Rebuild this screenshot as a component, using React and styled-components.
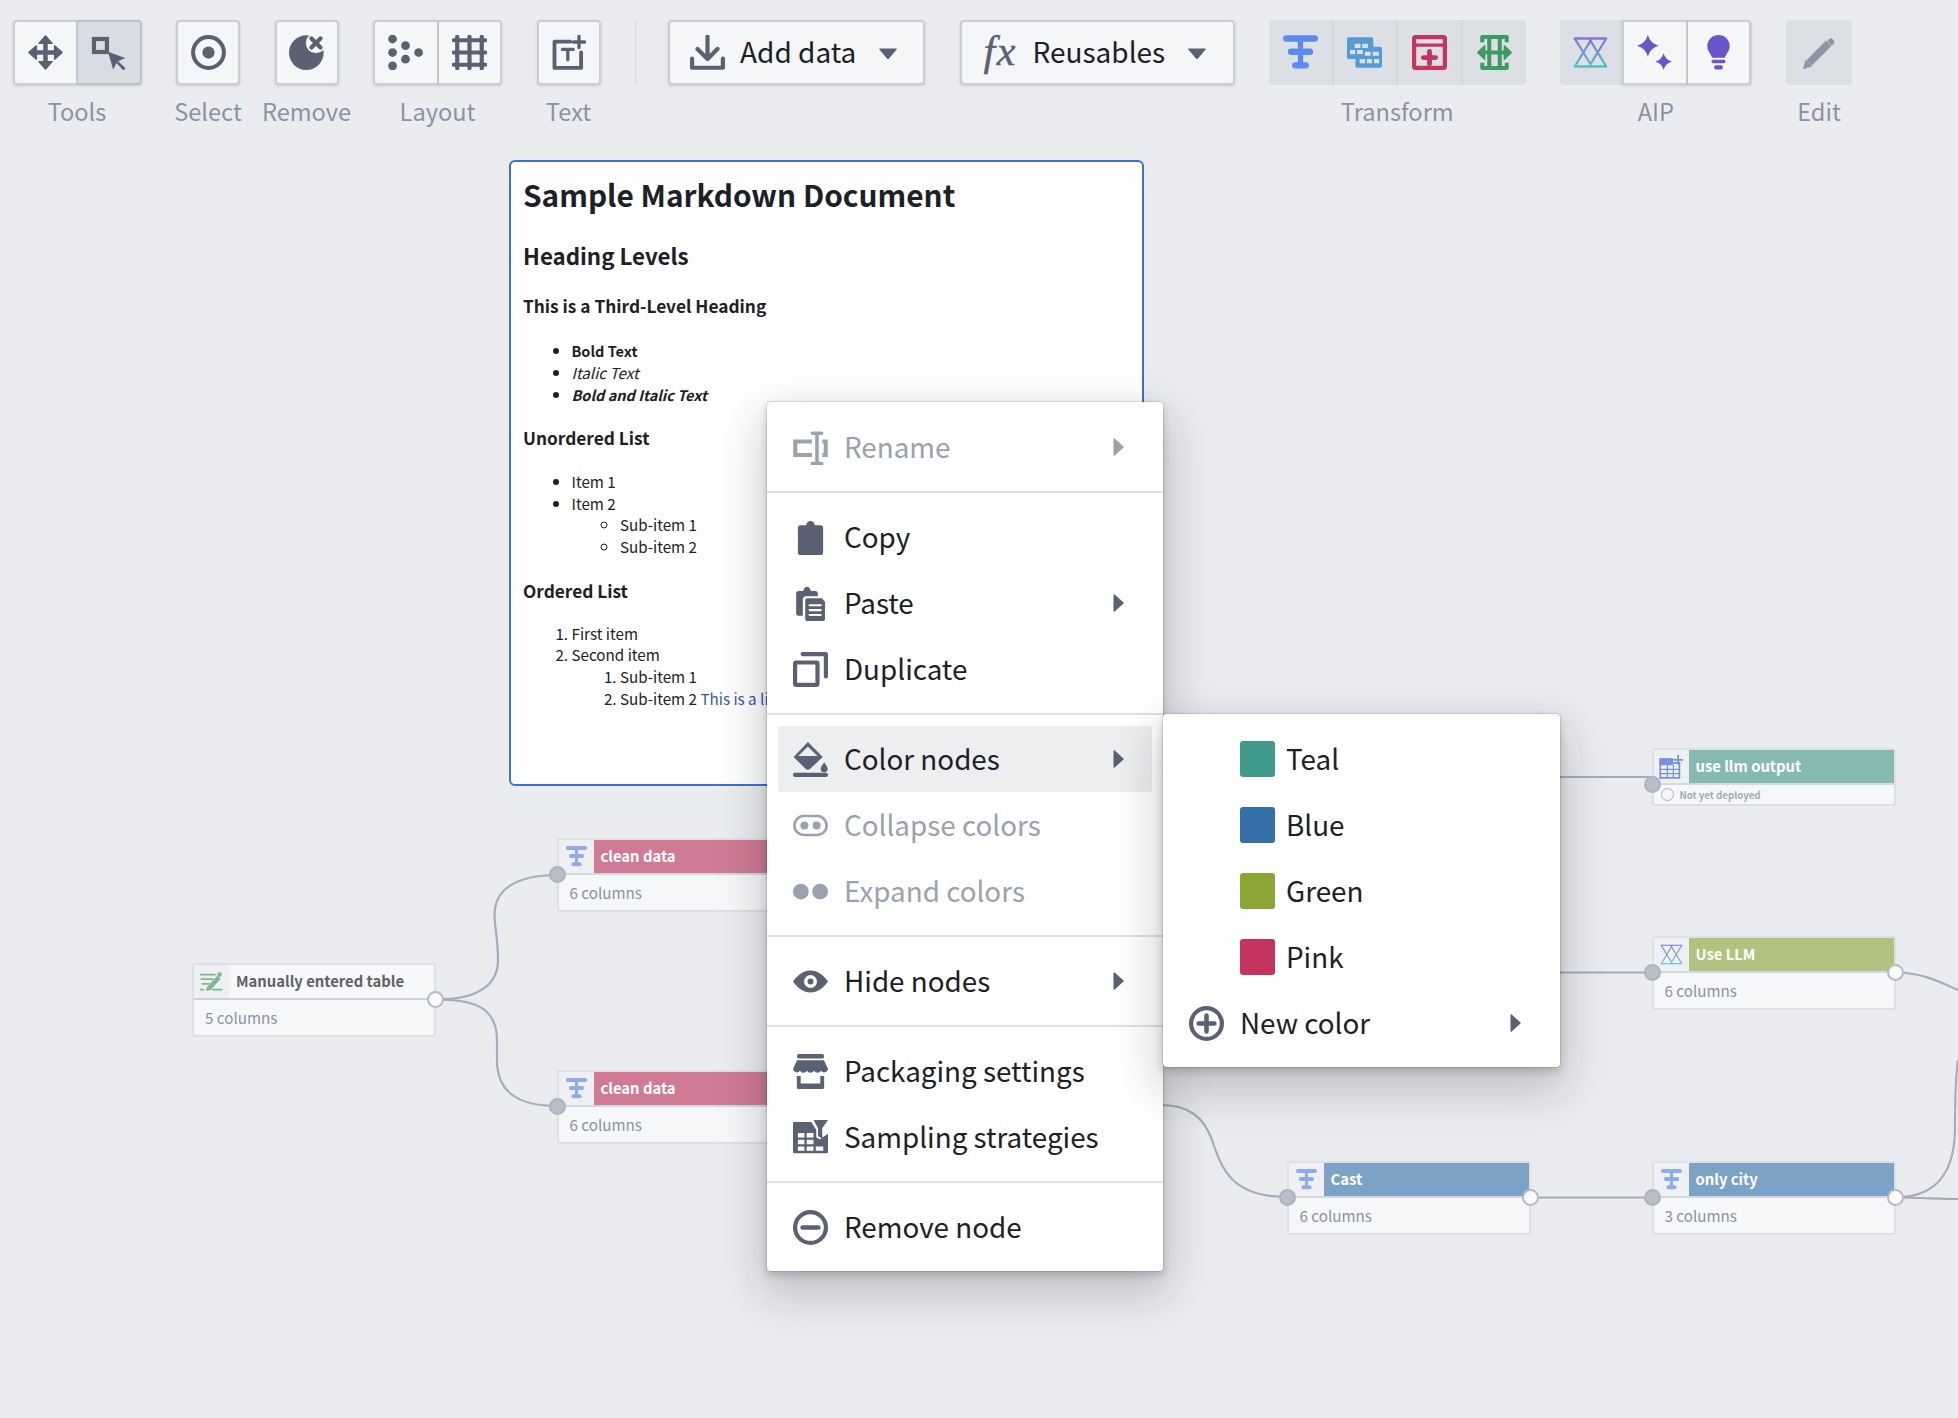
import React from "react";
import styled, { createGlobalStyle } from "styled-components";

const FONT = `"Noto Sans CJK JP", "Noto Sans", sans-serif`;
const INK = "#5a6172";
const DIM = "#9aa1af";
const CANVAS_TOP = 130;

const Global = createGlobalStyle`
  html, body { margin: 0; padding: 0; background: #ebecf0; }
  body { font-family: ${FONT}; color: #1c2127; }
  * { box-sizing: border-box; }
`;

const Page = styled.div`
  width: 1958px;
  height: 1418px;
  overflow: hidden;
  display: flex;
  flex-direction: column;
  background: #ebecf0;
`;

/* ---------- toolbar ---------- */
const Toolbar = styled.div`
  height: ${CANVAS_TOP}px;
  flex: none;
  display: flex;
  align-items: flex-start;
  gap: 34.5px;
  padding: 20px 0 0 12.5px;
`;
const Group = styled.div`
  width: ${(p) => p.$w}px;
  flex: none;
  display: flex;
  flex-direction: column;
  align-items: center;
`;
const Cells = styled.div`
  display: flex;
  width: 100%;
  height: 65px;
  border-radius: 4px;
  background: ${(p) => (p.$flat ? "#dcdfe4" : "transparent")};
`;
const Cell = styled.div`
  flex: 1;
  min-width: 0;
  height: 100%;
  display: flex;
  align-items: center;
  justify-content: center;
  background: ${(p) => (p.$active ? "#d8dce3" : p.$flat ? "transparent" : "#f5f6f8")};
  border: ${(p) => (p.$flat ? "0" : `2px solid ${p.$active ? "#bec2c8" : "#cbced3"}`)};
  border-left-width: ${(p) => (p.$joined ? "0" : undefined)};
  border-right: ${(p) => (p.$flat && p.$divide ? "2px solid #d4d7dc" : undefined)};
  box-shadow: ${(p) => (p.$flat ? "none" : "0 1px 3px rgba(17, 20, 24, 0.16)")};
  &:first-child { border-radius: 4px 0 0 4px; }
  &:last-child { border-radius: 0 4px 4px 0; }
  &:only-child { border-radius: 4px; }
`;
const Label = styled.div`
  margin-top: 10px;
  font-size: 23.6px;
  line-height: 32px;
  color: #8a93a3;
  white-space: nowrap;
`;
const Divider = styled.div`
  width: 1px;
  height: 65px;
  margin-right: -2.5px;
  flex: none;
  background: #d6d9de;
`;
const DropButton = styled.div`
  width: ${(p) => p.$w}px;
  height: 65px;
  flex: none;
  display: flex;
  align-items: center;
  padding-left: 20px;
  gap: 15px;
  background: #f5f6f8;
  border: 2px solid #cbced3;
  border-radius: 4px;
  box-shadow: 0 1px 3px rgba(17, 20, 24, 0.16);
  font-size: 28px;
  line-height: 40px;
`;
const DropText = styled.span`
  margin-right: 8px;
  margin-top: -3px;
  white-space: nowrap;
`;
const DropCaret = styled.span`
  margin-top: 2px;
`;
const Fx = styled.span`
  width: 34px;
  margin-left: 2px;
  margin-top: -4px;
  font-family: "Liberation Serif", serif;
  font-style: italic;
  font-size: 42px;
  letter-spacing: 1.5px;
  -webkit-text-stroke: 0.4px ${INK};
  color: ${INK};
  white-space: nowrap;
`;

/* ---------- canvas ---------- */
const Canvas = styled.div`
  position: relative;
  flex: 1;
`;
const Edges = styled.svg`
  position: absolute;
  left: 0;
  top: 0;
`;
const Doc = styled.div`
  position: absolute;
  left: 509px;
  top: ${160 - CANVAS_TOP}px;
  width: 635px;
  height: 626px;
  padding: 11.5px 12px 0;
  background: #fff;
  border: 2px solid #3f6fcf;
  border-radius: 6px;
`;
const H1 = styled.h1`
  margin: 0;
  font-size: 29.8px;
  line-height: 40px;
  font-weight: 700;
  white-space: nowrap;
`;
const H2 = styled.h2`
  margin: 26px 0 0;
  font-size: 22.3px;
  line-height: 30px;
  font-weight: 700;
`;
const H3 = styled.h3`
  margin: ${(p) => p.$top}px 0 0;
  font-size: 17.3px;
  line-height: 26px;
  font-weight: 700;
`;
const List = styled.ul`
  margin: ${(p) => (p.$nested ? 0 : p.$top)}px 0 0;
  padding-left: 48.5px;
  font-size: 15.2px;
  line-height: 21.8px;
  list-style-type: ${(p) => p.$marker};
  white-space: nowrap;
`;
const Italic = styled.em`
  font-style: italic;
`;
const Strong = styled.strong`
  font-weight: 700;
  font-size: 14.5px;
`;
const DocLink = styled.a`
  color: #2d58b4;
`;

/* ---------- nodes ---------- */
const Node = styled.div`
  position: absolute;
  left: ${(p) => p.$x}px;
  top: ${(p) => p.$y - CANVAS_TOP}px;
  width: 244px;
  background: #f6f7f9;
  border: 2px solid #dde0e5;
  border-radius: 3px;
`;
const NodeHead = styled.div`
  position: relative;
  height: 35px;
  display: flex;
  border-bottom: 2px solid ${(p) => (p.$color ? "#d4d8df" : "#cdd1d9")};
`;
const NodeIcon = styled.div`
  width: 35px;
  flex: none;
  display: flex;
  align-items: center;
  justify-content: center;
  background: #eef0f3;
`;
const NodeTitle = styled.div`
  flex: 1;
  display: flex;
  align-items: center;
  padding: 0 0 2px 7px;
  background: ${(p) => p.$color || "#f7f8fa"};
  color: ${(p) => (p.$color ? "#fff" : "#5f6368")};
  font-size: 14.8px;
  line-height: 22px;
  font-weight: 700;
  white-space: nowrap;
`;
const NodeBody = styled.div`
  height: 35px;
  display: flex;
  align-items: center;
  padding: 0 0 2px 11px;
  color: #8a93a3;
  font-size: 15.2px;
  line-height: 22px;
  white-space: nowrap;
`;
const NodeStatus = styled.div`
  height: 19px;
  display: flex;
  align-items: center;
  gap: 6px;
  padding-left: 7px;
  color: #a4aab5;
  font-size: 9.7px;
  line-height: 14px;
  font-weight: 700;
  white-space: nowrap;
`;
const StatusDot = styled.span`
  width: 13px;
  height: 13px;
  border: 1.5px solid #a9afb9;
  border-radius: 50%;
`;
const Port = styled.span`
  position: absolute;
  z-index: 1;
  ${(p) => (p.$out ? "right: -10px;" : "left: -10px;")}
  top: 100%;
  width: 17px;
  height: 17px;
  margin-top: -7.5px;
  border-radius: 50%;
  background: ${(p) => (p.$out ? "#fbfbfc" : "#b9bfc9")};
  border: 2px solid ${(p) => (p.$out ? "#b5bbc5" : "#adb3be")};
`;

/* ---------- menus ---------- */
const Menu = styled.div`
  position: absolute;
  left: ${(p) => p.$x}px;
  top: ${(p) => p.$y - CANVAS_TOP}px;
  width: ${(p) => p.$w}px;
  z-index: ${(p) => p.$z};
  background: #fff;
  border-radius: 4px;
  box-shadow: 0 0 0 1px rgba(17, 20, 24, 0.1), 0 4px 8px rgba(17, 20, 24, 0.2),
    0 18px 46px 6px rgba(17, 20, 24, 0.2);
`;
const Section = styled.div`
  padding: 11px;
  & + & { border-top: 2px solid #dfe1e5; }
  &:first-child { padding-top: 12px; }
`;
const Row = styled.div`
  height: 66px;
  display: flex;
  align-items: center;
  gap: ${(p) => (p.$tight ? 11 : 16)}px;
  padding: 0 28px 0 15px;
  border-radius: 3px;
  background: ${(p) => (p.$hover ? "#edeef0" : "transparent")};
  color: ${(p) => (p.$disabled ? DIM : "#1c2127")};
  font-size: 27.8px;
  line-height: 40px;
  white-space: nowrap;
`;
const RowText = styled.span`
  flex: 1;
  margin-top: -3px;
`;
const Swatch = styled.span`
  width: 35px;
  height: 36px;
  flex: none;
  margin-left: 51px;
  border-radius: 3px;
  background: ${(p) => p.$color};
`;

/* ---------- icons ---------- */
const Ico = ({ size = 35, color = INK, children, vb = "0 0 20 20" }) => (
  <svg width={size} height={size} viewBox={vb} fill={color} stroke="none" style={{ display: "block", flex: "none" }}>
    {children}
  </svg>
);
const s = (color, w) => ({ fill: "none", stroke: color, strokeWidth: w, strokeLinecap: "round", strokeLinejoin: "round" });

const MoveIcon = () => (
  <Ico>
    <path d="M10 2v16M2 10h16" {...s(INK, 2.6)} />
    <path d="M10 .5l3.800 4.300h-7.600zM10 19.500l3.800-4.300h-7.600zM.5 10l4.300-3.800v7.600zM19.500 10l-4.300-3.800v7.600z" stroke={INK} strokeWidth="0.8" strokeLinejoin="round" />
  </Ico>
);
const SelectBoxIcon = () => (
  <Ico>
    <rect x="1.700" y="2.300" width="7.400" height="7.400" fill="none" stroke={INK} strokeWidth="2.400" />
    <path d="M9.700 9.500L19.600 13.200L15.500 15L19.800 19L18.500 20.200L14.500 16L12.700 19.800z" />
  </Ico>
);
const TargetIcon = () => (
  <Ico>
    <circle cx="10" cy="10" r="8.800" {...s(INK, 2.300)} />
    <circle cx="10" cy="10" r="3.500" />
  </Ico>
);
const RemoveIcon = () => (
  <Ico>
    <circle cx="9.900" cy="10.100" r="9.900" />
    <circle cx="15.400" cy="4.600" r="5.800" fill="#f5f6f8" />
    <path d="M12.800 2l5.200 5.200M18 2l-5.200 5.200" {...s(INK, 2.400)} />
  </Ico>
);
const DotsIcon = () => (
  <Ico>
    {[[2.600, 2.300], [2.600, 10], [2.600, 17.600], [10, 6.100], [10, 13.800], [17.500, 10]].map(([x, y]) => (
      <circle key={`${x}-${y}`} cx={x} cy={y} r="2.500" />
    ))}
  </Ico>
);
const GridIcon = () => (
  <Ico>
    <path d="M3 1v18M10 1v18M17 1v18M1 3h18M1 10h18M1 17h18" {...s(INK, 2.400)} />
  </Ico>
);
const AddTextIcon = () => (
  <Ico>
    <path d="M11 3.800H2v15h15.200V10" {...s(INK, 2.200)} />
    <path d="M16 .8v6.400M12.800 4h6.400M6.500 8.200h6.200M9.600 8.200v6" {...s(INK, 1.900)} />
  </Ico>
);
const ImportIcon = () => (
  <Ico>
    <path d="M10 1v12.500M4.300 8l5.700 5.700L15.700 8" {...s(INK, 2.400)} />
    <path d="M1.200 13.500v5.200h17.600v-5.200" {...s(INK, 2.400)} />
  </Ico>
);
const Caret = ({ size = 18, color = INK }) => (
  <DropCaret>
    <svg width={size} height={size * 0.65} viewBox="0 0 20 13" fill={color} style={{ display: "block", flex: "none" }}>
      <path d="M1 .5h18a.8.800 0 0 1 .6 1.300l-9 10.500a.8.800 0 0 1-1.200 0L.4 1.800A.8.800 0 0 1 1 .5z" />
    </svg>
  </DropCaret>
);
const CaretRight = ({ color = INK }) => (
  <svg width="11" height="18" viewBox="0 0 11 18" fill={color} style={{ display: "block", flex: "none" }}>
    <path d="M.5 1a.7.700 0 0 1 1.200-.5l8.800 8a.7.700 0 0 1 0 1l-8.800 8a.7.700 0 0 1-1.200-.5z" />
  </svg>
);

const TransformIcon = ({ size = 35, color = "#5b8bef" }) => (
  <Ico size={size} color={color}>
    <rect x="8.500" y="2" width="3" height="14" />
    <rect x="0" y=".1" width="20" height="3.700" rx="1.850" />
    <rect x="2.800" y="7.700" width="14.400" height="3.700" rx="1.850" />
    <rect x="5.200" y="15.500" width="9.600" height="3.700" rx="1.850" />
  </Ico>
);
const JoinIcon = () => {
  const c = "#559bd6";
  return (
    <Ico color={c}>
      <rect x="0" y="1.300" width="15" height="12.400" rx="1.200" />
      <rect x="4.800" y="6.700" width="15.200" height="12" rx="1.200" />
      <path d="M4.400 5h3.300v2.400H4.400zM8.700 5h3.300v2.400H8.700zM1.700 8.600h3v2.400h-3zM5.800 8.600H9v2.300H5.800zM10.200 9.600h3.300v2.300h-3.300zM14.700 9.600h3.500v2.300h-3.500zM7.200 13.700h3.200v2.400H7.200zM11.400 13.700h2.900v2.400h-2.900zM15.400 13.700h3v2.400h-3z" fill="#dde1e6" />
    </Ico>
  );
};
const AddRowIcon = () => {
  const c = "#c4355f";
  return (
    <Ico>
      <rect x="1.200" y="1.200" width="17.600" height="17.600" rx=".8" {...s(c, 2.400)} />
      <path d="M1.200 5.800h17.600" {...s(c, 1.800)} />
      <path d="M10 9.400v7M6.500 12.900h7" {...s(c, 2.800)} />
    </Ico>
  );
};
const ExpandIcon = () => {
  const c = "#3f9a5f";
  return (
    <Ico color={c}>
      <path d="M3 4.200V1.200h14v3M3 15.800v3h14v-3M7 1.200v17.600M13 1.200v17.600M3 10h14" fill="none" stroke={c} strokeWidth="2.300" strokeLinejoin="round" />
      <path d="M.4 10l4-3.900v7.800zM19.600 10l-4-3.900v7.800z" stroke={c} strokeWidth="0.8" strokeLinejoin="round" />
    </Ico>
  );
};
const AipLogo = ({ size = 35, id = "aip", w = 1.300 }) => (
  <Ico size={size}>
    <defs>
      <linearGradient id={id} x1="0" y1="0" x2="0" y2="1">
        <stop offset="0" stopColor="#8272e4" />
        <stop offset="1" stopColor="#55c0c0" />
      </linearGradient>
    </defs>
    <path d="M1 2h9.800L1 18h9.800zM9.200 2H19L9.200 18H19z" fill="none" stroke={`url(#${id})`} strokeWidth={w} strokeLinejoin="round" />
  </Ico>
);
const Star = ({ c, r }) => (
  <path d={`M${c} ${c - r}Q${c + r * 0.22} ${c - r * 0.22} ${c + r} ${c}Q${c + r * 0.22} ${c + r * 0.22} ${c} ${c + r}Q${c - r * 0.22} ${c + r * 0.22} ${c - r} ${c}Q${c - r * 0.22} ${c - r * 0.22} ${c} ${c - r}z`} />
);
const SparkleIcon = () => (
  <Ico color="#6b55cc">
    <Star c={6.200} r={6.200} />
    <Star c={15.200} r={4.800} />
  </Ico>
);
const BulbIcon = () => (
  <Ico color="#6b55cc">
    <path d="M10 0a6.400 6.400 0 0 1 6.400 6.400c0 2.800-2 4.200-2.800 6.600H6.400C5.600 10.600 3.600 9.200 3.600 6.400A6.400 6.400 0 0 1 10 0z" />
    <rect x="6" y="14.200" width="8" height="1.900" rx=".95" />
    <rect x="7.500" y="17.300" width="5" height="2.400" rx="1.100" />
  </Ico>
);
const PencilIcon = () => {
  const c = "#8f96a3";
  return (
    <Ico color={c}>
      <path d="M4.200 15.800L15.300 4.700" fill="none" stroke={c} strokeWidth="4.400" />
      <path d="M15.400 2.400a1.500 1.500 0 0 1 2.100 0l.6.6a1.500 1.500 0 0 1 0 2.100l-1 1-2.700-2.700zM.5 19.500l1.600-5.500 3.900 3.900z" />
    </Ico>
  );
};

const RenameIcon = ({ c = DIM }) => (
  <Ico color={c}>
    <path d="M10.800 6.600H1.300v7.700h9.500M16.800 6.600h1.900v7.700h-1.900" fill="none" stroke={c} strokeWidth="2.300" />
    <path d="M13.700 2.200v16.600M11 1.800h5.400M11 19.200h5.400" {...s(c, 2)} />
  </Ico>
);
const ClipIcon = () => (
  <Ico>
    <path d="M4.300 3h3.200c.3-1.500 1.200-2.500 2.500-2.500s2.200 1 2.500 2.500h3.200c.9 0 1.500.6 1.500 1.500v14c0 .9-.6 1.500-1.500 1.500H4.300c-.9 0-1.500-.6-1.500-1.500v-14C2.800 3.600 3.400 3 4.300 3z" />
  </Ico>
);
const PasteIcon = () => (
  <Ico>
    <path d="M3.300 2.800h2.500C6.100 1.500 7 .4 8 .4s1.900 1.100 2.200 2.400h2.500c.9 0 1.500.6 1.500 1.500v1.500H7.600c-1.200 0-2 .8-2 2V17H3.300c-.9 0-1.500-.6-1.500-1.500V4.300c0-.9.6-1.500 1.500-1.500z" />
    <path d="M8 7h8.500l1.800 2v10a1 1 0 0 1-1 1H8a1 1 0 0 1-1-1V8a1 1 0 0 1 1-1z" />
    <path d="M9 11h7.300M9 13.800h7.300M9 16.600h7.300" fill="none" stroke="#fff" strokeWidth="1.200" />
  </Ico>
);
const DuplicateIcon = () => (
  <Ico>
    <rect x="1.200" y="6" width="12.800" height="12.800" rx=".6" {...s(INK, 2.400)} />
    <path d="M5.500 1.200h13.300V14" {...s(INK, 2.400)} />
  </Ico>
);
const BucketIcon = ({ bg = "#edeef0" }) => (
  <Ico>
    <path d="M8.500 0l8.500 8.500-7 6.700a2.200 2.200 0 0 1-3 0L.4 8.500z" />
    <path d="M8.500 2.600L14 8H3z" fill={bg} />
    <path d="M17.800 11.500c-1.300 1.800-2 2.900-2 3.800a2 2 0 0 0 4 0c0-.9-.7-2-2-3.800z" />
    <rect x="0" y="17.600" width="20" height="2.400" rx="1.100" />
  </Ico>
);
const PillIcon = () => (
  <Ico color={DIM}>
    <rect x=".8" y="4.600" width="18.400" height="10.800" rx="5.400" fill="none" stroke={DIM} strokeWidth="1.500" />
    <circle cx="6.500" cy="10" r="2.300" />
    <circle cx="13.500" cy="10" r="2.300" />
  </Ico>
);
const TwoDotsIcon = () => (
  <Ico color={DIM}>
    <circle cx="4.500" cy="10" r="4.500" />
    <circle cx="15.500" cy="10" r="4.500" />
  </Ico>
);
const EyeIcon = () => (
  <Ico>
    <path d="M0 10c2.800-3.900 6-6.300 10-6.300S17.200 6.100 20 10c-2.800 3.900-6 6.300-10 6.300S2.800 13.900 0 10z" />
    <circle cx="10" cy="10" r="3.700" fill="#fff" />
    <circle cx="10" cy="10" r="1.700" />
  </Ico>
);
const StoreIcon = () => (
  <Ico>
    <rect x="2.300" y="0" width="15.400" height="2.500" rx="1" />
    <path d="M2.300 3.500h15.400L20 8.600a2.200 2.200 0 0 1-4 1 2.300 2.300 0 0 1-4 0 2.300 2.300 0 0 1-4 0 2.300 2.300 0 0 1-4 0 2.200 2.200 0 0 1-4-1z" />
    <path d="M3.300 12.500V19h13.400v-6.500" fill="none" stroke={INK} strokeWidth="2.200" strokeLinejoin="round" />
    <rect x="3.300" y="16.800" width="13.400" height="3.200" rx="1" />
  </Ico>
);
const SamplingIcon = () => (
  <Ico>
    <path d="M.6 1.200h9.800l2.900 4.400V10l2.300 1.200 1-1.200 3.400-2v10.100a.9.900 0 0 1-.9.900H.9a.9.900 0 0 1-.9-.9V1.800a.6.600 0 0 1 .6-.6z" />
    <path d="M11.800 0H20l-3.300 4.700v6l-2.400-1.600V4.700z" />
    <path d="M2.800 7.400h3.700v2.600H2.800zM7.800 7.400h3.900v2.600H7.800zM2.800 11.300h3.700v2.600H2.800zM7.800 11.300h3.900v2.600H7.800zM2.800 15.100h3.700v2.400H2.800zM7.800 15.100h3.900v2.400H7.800zM13 15.100h4.300v2.400H13z" fill="#fff" />
  </Ico>
);
const MinusCircleIcon = () => (
  <Ico>
    <circle cx="10" cy="10" r="8.800" {...s(INK, 2.400)} />
    <path d="M5.500 10h9" {...s(INK, 2.600)} />
  </Ico>
);
const PlusCircleIcon = () => (
  <Ico>
    <circle cx="10" cy="10" r="8.800" {...s(INK, 2.400)} />
    <path d="M5.500 10h9M10 5.500v9" {...s(INK, 2.600)} />
  </Ico>
);
const TableAddIcon = ({ size = 24 }) => {
  const c = "#7a8fe0";
  return (
    <Ico size={size} color={c}>
      <path d="M1 3.500h10v3H17V19H1z" fill="none" stroke={c} strokeWidth="1.400" />
      <path d="M1 3.500h10V8H1zM1 12h16M1 15.500h16M7 8v11M12 8v11" stroke={c} strokeWidth="1" />
      <path d="M16 .5v7M12.500 4h7" {...s(c, 1.500)} />
    </Ico>
  );
};
const EditTableIcon = () => {
  const c = "#7fb98f";
  return (
    <Ico size={23} color={c}>
      <path d="M0 4h13M1 8h10M2 12h6M0 17h3M11 17h8" {...s(c, 1.500)} />
      <path d="M5 18l1-3 9-10 3 2.500-9 10z" />
      <circle cx="17" cy="4" r="2" />
    </Ico>
  );
};

/* ---------- data ---------- */
const TF = <TransformIcon size={21} color="#8fabea" />;
const NODES = [
  { id: "manual", x: 192, y: 963, title: "Manually entered table", body: "5 columns", out: true, icon: <EditTableIcon /> },
  { id: "clean1", x: 556.500, y: 838, title: "clean data", color: "#d07a95", body: "6 columns", in: true, icon: TF },
  { id: "clean2", x: 556.500, y: 1070, title: "clean data", color: "#d07a95", body: "6 columns", in: true, icon: TF },
  { id: "output", x: 1651.500, y: 748, title: "use llm output", color: "#86bab0", status: "Not yet deployed", in: true, icon: <TableAddIcon /> },
  { id: "llm", x: 1651.500, y: 936, title: "Use LLM", color: "#b1c380", body: "6 columns", in: true, out: true, icon: <AipLogo size={23} id="aip-node" w={0.9} /> },
  { id: "cast", x: 1286.500, y: 1161, title: "Cast", color: "#7ca2c5", body: "6 columns", in: true, out: true, icon: TF },
  { id: "city", x: 1651.500, y: 1161, title: "only city", color: "#7ca2c5", body: "3 columns", in: true, out: true, icon: TF },
];

const EDGES = [
  "M436 999.500 C478 999.500 498 985 498 960 C498 940 494.500 925 494.500 915 C494.500 890 515 875 558 875",
  "M436 999.500 C470 999.500 497 1005 497 1040 L497 1060 C497 1090 515 1106 558 1106",
  "M1160 777 H1653",
  "M1160 972.500 H1653",
  "M1160 1105 C1190 1105 1204 1118 1212 1140 C1222 1170 1232 1197 1288 1197",
  "M1530 1197.500 H1653",
  "M1896 1197.500 C1920 1197.500 1940 1199 1958 1199",
  "M1896 1197.500 C1930 1197 1954 1180 1955 1130 C1955 1110 1955 1080 1958 1060",
  "M1896 972.500 C1925 972.500 1945 985 1958 990",
];

const MENU = [
  [{ label: "Rename", icon: <RenameIcon />, sub: true, disabled: true }],
  [
    { label: "Copy", icon: <ClipIcon /> },
    { label: "Paste", icon: <PasteIcon />, sub: true },
    { label: "Duplicate", icon: <DuplicateIcon /> },
  ],
  [
    { label: "Color nodes", icon: <BucketIcon />, sub: true, hover: true },
    { label: "Collapse colors", icon: <PillIcon />, disabled: true },
    { label: "Expand colors", icon: <TwoDotsIcon />, disabled: true },
  ],
  [{ label: "Hide nodes", icon: <EyeIcon />, sub: true }],
  [
    { label: "Packaging settings", icon: <StoreIcon /> },
    { label: "Sampling strategies", icon: <SamplingIcon /> },
  ],
  [{ label: "Remove node", icon: <MinusCircleIcon /> }],
];

const COLORS = [
  ["Teal", "#3f9a8b"],
  ["Blue", "#3570aa"],
  ["Green", "#8aa736"],
  ["Pink", "#c4345f"],
];

const ToolGroup = ({ w, label, flat, children }) => (
  <Group $w={w}>
    <Cells $flat={flat}>{children}</Cells>
    <Label>{label}</Label>
  </Group>
);

export default function App() {
  return (
    <Page>
      <Global />
      <Toolbar>
        <ToolGroup w={129} label="Tools">
          <Cell><MoveIcon /></Cell>
          <Cell $active $joined><SelectBoxIcon /></Cell>
        </ToolGroup>
        <ToolGroup w={64} label="Select"><Cell><TargetIcon /></Cell></ToolGroup>
        <ToolGroup w={64} label="Remove"><Cell><RemoveIcon /></Cell></ToolGroup>
        <ToolGroup w={129} label="Layout">
          <Cell><DotsIcon /></Cell>
          <Cell $joined><GridIcon /></Cell>
        </ToolGroup>
        <ToolGroup w={64} label="Text"><Cell><AddTextIcon /></Cell></ToolGroup>
        <Divider />
        <DropButton $w={257}>
          <ImportIcon />
          <DropText>Add data</DropText>
          <Caret />
        </DropButton>
        <DropButton $w={275}>
          <Fx>fx</Fx>
          <DropText>Reusables</DropText>
          <Caret />
        </DropButton>
        <ToolGroup w={256.5} label="Transform" flat>
          <Cell $flat $divide><TransformIcon /></Cell>
          <Cell $flat $divide><JoinIcon /></Cell>
          <Cell $flat $divide><AddRowIcon /></Cell>
          <Cell $flat><ExpandIcon /></Cell>
        </ToolGroup>
        <ToolGroup w={191.5} label="AIP" flat>
          <Cell $flat><AipLogo /></Cell>
          <Cell><SparkleIcon /></Cell>
          <Cell $joined><BulbIcon /></Cell>
        </ToolGroup>
        <ToolGroup w={66} label="Edit" flat>
          <Cell $flat><PencilIcon /></Cell>
        </ToolGroup>
      </Toolbar>

      <Canvas>
        <Edges width="1958" height={1418 - CANVAS_TOP} viewBox={`0 ${CANVAS_TOP} 1958 ${1418 - CANVAS_TOP}`} fill="none" stroke="#a6adb9" strokeWidth="2.200">
          {EDGES.map((d) => <path key={d} d={d} />)}
        </Edges>

        <Doc>
          <H1>Sample Markdown Document</H1>
          <H2>Heading Levels</H2>
          <H3 $top={23.500}>This is a Third-Level Heading</H3>
          <List $top={21} $marker="disc">
            <li><Strong>Bold Text</Strong></li>
            <li><Italic>Italic Text</Italic></li>
            <li><Strong><Italic>Bold and Italic Text</Italic></Strong></li>
          </List>
          <H3 $top={19.500}>Unordered List</H3>
          <List $top={20} $marker="disc">
            <li>Item 1</li>
            <li>
              Item 2
              <List $nested $marker="circle">
                <li>Sub-item 1</li>
                <li>Sub-item 2</li>
              </List>
            </li>
          </List>
          <H3 $top={20}>Ordered List</H3>
          <List as="ol" $top={18.500} $marker="decimal">
            <li>First item</li>
            <li>
              Second item
              <List as="ol" $nested $marker="decimal">
                <li>Sub-item 1</li>
                <li>Sub-item 2 <DocLink>This is a link</DocLink></li>
              </List>
            </li>
          </List>
        </Doc>

        {NODES.map((n) => (
          <Node key={n.id} $x={n.x} $y={n.y}>
            <NodeHead $color={n.color}>
              <NodeIcon>{n.icon}</NodeIcon>
              <NodeTitle $color={n.color}>{n.title}</NodeTitle>
              {n.in && <Port />}
              {n.out && <Port $out />}
            </NodeHead>
            {n.status ? (
              <NodeStatus><StatusDot />{n.status}</NodeStatus>
            ) : (
              <NodeBody>{n.body}</NodeBody>
            )}
          </Node>
        ))}

        <Menu $x={767} $y={402} $w={396} $z={2}>
          {MENU.map((section) => (
            <Section key={section[0].label}>
              {section.map((item) => (
                <Row key={item.label} $hover={item.hover} $disabled={item.disabled}>
                  {item.icon}
                  <RowText>{item.label}</RowText>
                  {item.sub && <CaretRight color={item.disabled ? DIM : INK} />}
                </Row>
              ))}
            </Section>
          ))}
        </Menu>

        <Menu $x={1163} $y={714} $w={397} $z={3}>
          <Section>
            {COLORS.map(([name, color]) => (
              <Row key={name} $tight>
                <Swatch $color={color} />
                <RowText>{name}</RowText>
              </Row>
            ))}
            <Row>
              <PlusCircleIcon />
              <RowText>New color</RowText>
              <CaretRight />
            </Row>
          </Section>
        </Menu>
      </Canvas>
    </Page>
  );
}
